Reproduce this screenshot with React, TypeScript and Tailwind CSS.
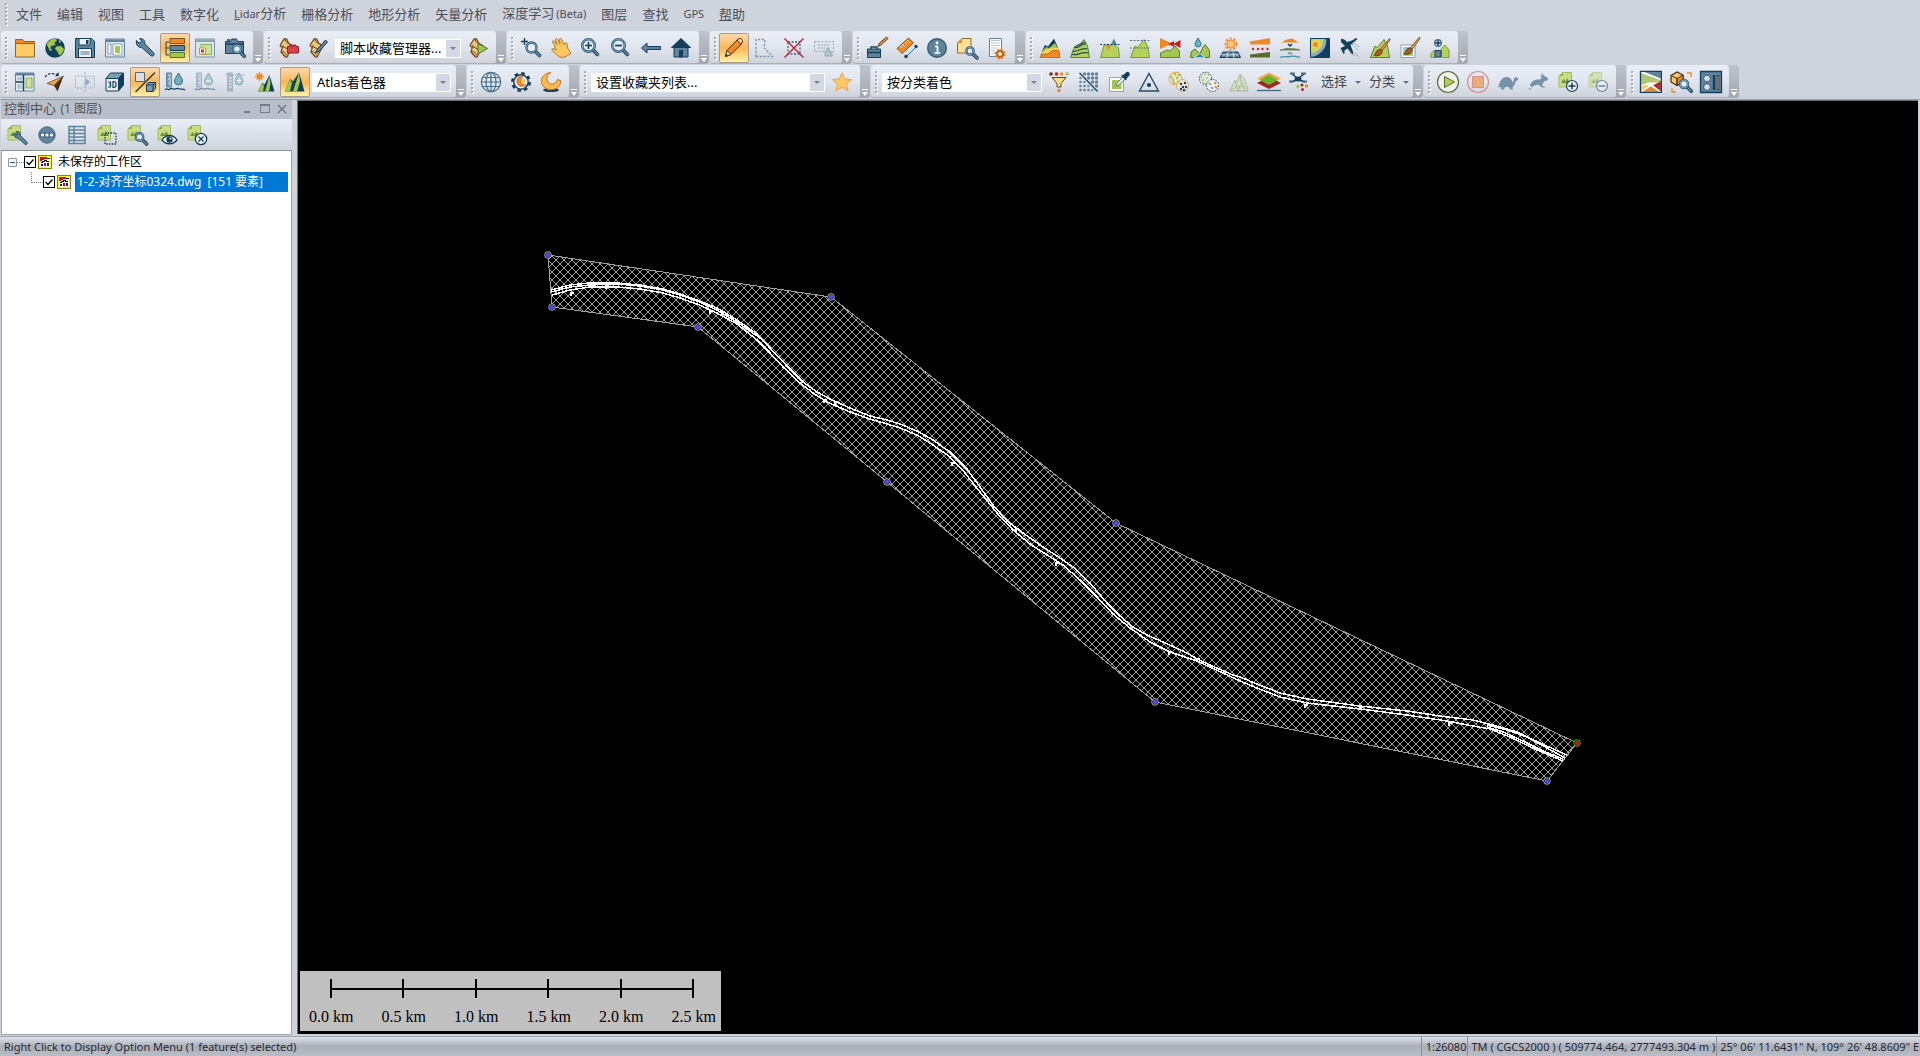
import React from "react";
import type { ReactNode } from "react";

const NAVY = "#123f5e";
const SLATE = "#5f849c";
const GREEN = "#a3c64c";
const ORANGE = "#ee8a26";
const GOLD = "#fbc75e";

/* ---------- shared pieces of the icon set ---------- */

const Doc = (
  <g>
    <path d="M1 4 5 .5h8.500V15H1z" fill="#c9dc82" stroke="#a3b96a" strokeWidth="1" />
    <path d="M1 4h4V.5z" fill="#8fae45" />
    <path d="M3 11l2.500-4 2 2.500L9 6l3 5z" fill="#6f9440" />
  </g>
);

const Lens = ({ x, y, r = 4 }: { x: number; y: number; r?: number }) => (
  <g>
    <path d={`M${x + r * 0.7} ${y + r * 0.7}l4.500 4.500`} stroke={NAVY} strokeWidth="3.600" strokeLinecap="round" />
    <path d={`M${x + r * 0.9} ${y + r * 0.9}l3.800 3.800`} stroke={SLATE} strokeWidth="1.800" strokeLinecap="round" />
    <circle cx={x} cy={y} r={r} fill="#e3edf3" stroke="#2c5a78" strokeWidth="2.400" />
    <circle cx={x} cy={y} r={r} fill="none" stroke="#7fa3b8" strokeWidth="1" />
  </g>
);

const Peaks = ({ fill = "#b4d25a", stroke = "#5e7f33" }: { fill?: string; stroke?: string }) => (
  <path d="M.5 19.500 5 8l2.500 1.500L14 1.500 17.500 8l2 11.500z" fill={fill} stroke={stroke} strokeWidth="1" />
);

const Wrench = (
  <path d="M1.500 2.500 4 5l2-.5L6.500 2.500 4.500.8c3-.8 6 1.400 5.300 5L18.500 14.800a1.800 1.800 0 0 1-2.700 2.700L6.500 9.300C3 10 .5 6 1.500 2.500z" fill={SLATE} stroke={NAVY} strokeWidth="1" />
);

const Scroll = ({ children }: { children?: ReactNode }) => (
  <g>
    <path d="M6 1 2.500 6.500c-1 2 1 3 2 2L3 14l4 4.500c1 1 3 .5 3-1.500l5-9-4.500-3L9 1.500C8 .3 7 .3 6 1z" fill="#ecc67f" stroke="#6b4420" strokeWidth="1.200" />
    <path d="M6 1.500c2 0 1.500 3 4.500 4M3.500 14c3-1 4 1 5 3.500M4.500 8.500 10 11" fill="none" stroke="#6b4420" strokeWidth="1" />
    {children}
  </g>
);

const Drop = ({ x, y }: { x: number; y: number }) => (
  <path d={`M${x} ${y}c2 3.500 4 5.500 4 8a4 4 0 0 1-8 0c0-2.500 2-4.500 4-8z`} fill="#6fb0bd" stroke="#3a6c7e" strokeWidth="1" />
);

const Ruler = (
  <g>
    <path d="M1.500 1h5v14h-5z" fill="#7396aa" stroke={SLATE} />
    <path d="M3 3h3M4 5h2M3 7h3M4 9h2M3 11h3M4 13h2" stroke="#e3ebf2" />
    <path d="M0 18c2-3 3 1 5-1s3 1 5 0 3-1 5 0 3-1 5 1" fill="none" stroke={NAVY} strokeWidth="1.200" />
  </g>
);

const Dots = ({ pts, c, r = 1.2 }: { pts: number[][]; c: string; r?: number }) => (
  <g fill={c}>
    {pts.map(([x, y], i) => (
      <circle key={i} cx={x} cy={y} r={r} />
    ))}
  </g>
);

const Brush = (
  <g>
    <path d="M19.500.5 10.500 11l2 1.500L20 2z" fill="#e79a4e" stroke="#6b3f1d" strokeWidth=".8" />
    <path d="M4 17.500c2-1 2-5.500 5-6 2-.2 3.500 1.500 3 3-.6 2.500-4.500 4-8 3z" fill="#b05c20" stroke="#4f2b12" strokeWidth=".9" />
  </g>
);

const BATCH = [[2.5, 5], [6, 2], [4, 8], [8, 6], [5, 11], [9, 10], [10, 3]];
const BATCH_LOW = [[12, 12], [16, 11], [14, 15], [17, 15], [12, 17], [15, 18]];

const icons: Record<string, ReactNode> = {
  open: (
    <g stroke="#8b6634" strokeWidth="1">
      <path d="M.5 6V1.500h7L9 3.500h10.500V6z" fill={ORANGE} />
      <path d="M.5 5.500h19v13.500H.5z" fill="#fccb66" />
    </g>
  ),
  globe: (
    <g>
      <circle cx="10" cy="10" r="9.800" fill={NAVY} />
      <path d="M1.500 6C4 2 8 0 11 .8l1 1.700-2.500 2 1 2.500L6 8l-.5 2.500 2 1.500-2.500 1zM11 8.500l5-.5 3 3c-.5 3-2 5-4.500 6.500L12 13l-2-2z" fill={GREEN} />
      <path d="m14 2 2.500 1.500L14 5z" fill={GREEN} />
    </g>
  ),
  save: (
    <g>
      <path d="M.5.5h16l3 3v16H.5z" fill={SLATE} stroke={NAVY} />
      <path d="M4 .5h11V7H4z" fill="#edf1f6" stroke={NAVY} />
      <path d="M11 2h2.500v4H11z" fill={NAVY} />
      <path d="M3.500 10.500h13v9h-13z" fill="#edf1f6" stroke={NAVY} />
      <path d="M5.500 13h9v4h-9z" fill="#9fb3c0" />
    </g>
  ),
  layout: (
    <g>
      <path d="M.5 1h19v18H.5z" fill="#dbe4ec" stroke={SLATE} />
      <path d="M1 1.500h18V4H1z" fill={SLATE} />
      <path d="M3 6h3v10H3zM8 6h9v11H8z" fill="#fff" stroke="#86a1b2" />
      <path d="M10 8h5v7h-5z" fill={GREEN} />
    </g>
  ),
  wrench: Wrench,
  control: (
    <g>
      <path d="M4 4H1v13h3M1 10h3" fill="none" stroke={NAVY} />
      <path d="M5 .5h14.500v5H5z" fill={ORANGE} stroke="#7b5226" />
      <path d="M5 7.500h14.500v5H5z" fill={SLATE} stroke={NAVY} />
      <path d="M5 14.500h14.500v5H5z" fill={GREEN} stroke="#58752c" />
    </g>
  ),
  overview: (
    <g>
      <path d="M.5 1h19v18H.5z" fill="#dbe4ec" stroke="#7897a8" />
      <path d="M1 1.500h18V4H1z" fill="#8ba7b5" />
      <path d="M6 6.500h10.500v10H6z" fill="#cfe09a" stroke="#8fac63" />
      <path d="M4.500 10h6v6h-6z" fill="#fff" stroke={ORANGE} />
      <path d="M6 11.500h3v3H6z" fill="#c23a2a" />
    </g>
  ),
  camera: (
    <g>
      <path d="M.5 3.500h5l1-2.500h5l1 2.500h6v12H.5z" fill={SLATE} stroke={NAVY} />
      <path d="M2 2h3M1 6h17" stroke={NAVY} strokeWidth="1.500" />
      <Lens x={12} y={11} />
    </g>
  ),
  scriptLib: (
    <Scroll>
      <path d="M9.500 8.500h2V7H14v1.500h1.500V7H18v1.500h2.500V15h-11z" fill="#dd3f4b" stroke="#8d2230" />
    </Scroll>
  ),
  scriptEdit: (
    <Scroll>
      <path d="m17.500 2-8 9-2 4 4-2 8-9z" fill={SLATE} stroke={NAVY} />
    </Scroll>
  ),
  scriptRun: (
    <Scroll>
      <path d="m10 5.500 9.500 5-9.500 5.500z" fill={GREEN} stroke="#4d6a25" />
    </Scroll>
  ),
  zoomTool: (
    <g>
      <path d="M0 3.500h7M3.500 0v7" stroke={NAVY} strokeWidth="1.400" />
      <Lens x={10.5} y={9.5} r={5} />
    </g>
  ),
  pan: (
    <path d="M3 6.500 1.500 4.200c-.5-1.500 1.500-2 2-1L6 7 4.500 2c-.2-1.600 1.800-1.800 2.300-.5L9 6 8.500 1.500c0-1.600 2-1.600 2.300 0L13 6.500l1-1.500c1-1 2 0 2 1l1 5c1 1.500 2.500 2 2.500 4.500L15 18.500c-3 1.500-6.500 1-8.500-1L1 12.500c-.8-1.500 1-2.500 2-1.500l2 1z" fill={GOLD} stroke="#a5712b" strokeWidth=".9" />
  ),
  zoomIn: (
    <g>
      <Lens x={7.5} y={7.5} r={6.3} />
      <path d="M4 7.500h7M7.500 4v7" stroke={NAVY} strokeWidth="1.700" />
    </g>
  ),
  zoomOut: (
    <g>
      <Lens x={7.5} y={7.5} r={6.3} />
      <path d="M4 7.500h7" stroke={NAVY} strokeWidth="1.700" />
    </g>
  ),
  back: <path d="M.5 10 6 5v3.500h13.500v3H6V15z" fill={SLATE} stroke={NAVY} />,
  home: (
    <g>
      <path d="M3 9h14v10H3z" fill={SLATE} stroke={NAVY} />
      <path d="M-.5 10 10 0l10.500 10z" fill={NAVY} />
      <path d="M8 12h4v7.500H8z" fill={NAVY} />
    </g>
  ),
  digitizer: (
    <g>
      <path d="m1.500 18.500 1.500-6L13 2l4.500 4L7 16.500z" fill={ORANGE} stroke="#4c3320" />
      <path d="m13 2 2-1.500c2-.5 4 1.500 3.500 3.500L17 6z" fill="#f3d6a0" stroke="#4c3320" />
      <path d="m3 12.500 4 4-5.500 2z" fill="#f8dfa8" stroke="#4c3320" />
      <path d="m1.500 18.500.8-2.500 1.500 1.500z" fill="#2b211b" />
    </g>
  ),
  vertexEdit: <path d="M2 18.500V1.500h9l-1 8 8.500 9z" fill="none" stroke="#7894a9" strokeWidth="1.300" strokeDasharray="2.200 1.600" />,
  deleteFeature: (
    <g>
      <path d="M4 4h12v12H4z" fill="none" stroke="#3e5f85" strokeDasharray="2 1.500" strokeWidth="1.300" />
      <path d="M.5.5l19 19M19.500.5l-19 19" stroke="#c22535" strokeWidth="1.500" />
    </g>
  ),
  moveFeature: (
    <g opacity=".6">
      <path d="M.5 3.500h19v10H.5z" fill="#dbe2ea" stroke={SLATE} strokeDasharray="2 1.500" />
      <path d="M4 7h12M4 10h7" stroke={SLATE} strokeDasharray="2 1" />
      <path d="M11 18v-5h2v-3h2v4h3v4z" fill="#9fb3c1" stroke={SLATE} />
    </g>
  ),
  toolbox: (
    <g>
      <path d="M.5 11h13v8.500H.5z" fill={SLATE} stroke={NAVY} />
      <path d="M4 11V9h6v2M.5 14.500h13" fill="none" stroke={NAVY} strokeWidth="1.300" />
      <path d="m11 8.500 1.500-3.500L19.500-1 21 .5l-6.500 6z" fill="#e39a4e" stroke="#5e371a" />
    </g>
  ),
  measure: (
    <g>
      <path d="M0 10.500 11.500 0l5 5L5 15.500z" fill={ORANGE} stroke="#8e4f1c" />
      <path d="m3 8 2 2M5 6l2.500 2.500M8 4l2 2M10 2l2.500 2.500" stroke="#fff" />
      <path d="m9 19 10-10" stroke="#2c72a5" />
      <Dots pts={[[9, 18.5], [19, 8.5]]} c={NAVY} r={1.7} />
    </g>
  ),
  info: (
    <g>
      <circle cx="10" cy="10" r="9.300" fill={SLATE} stroke="#3a5a70" strokeWidth="1.400" />
      <circle cx="10" cy="5" r="1.400" fill="#fff" />
      <path d="M8 8.500h2.500V15M7.500 15H13" fill="none" stroke="#fff" strokeWidth="1.700" />
    </g>
  ),
  searchDoc: (
    <g>
      <path d="M.5 5 5 .5h9V15H.5z" fill="#fbe09a" stroke="#8e6b33" />
      <path d="M.5 5H5V.5z" fill={ORANGE} />
      <Lens x={13} y={13} r={3.6} />
    </g>
  ),
  mapSettings: (
    <g>
      <path d="M2.500.5h12v18h-12z" fill="#fff" stroke={SLATE} />
      <path d="M4 2.500h9M4 5h9M4 7.500h9M4 10h6M4 12.500h4M4 15h4" stroke="#b2c6d1" />
      <circle cx="13" cy="16" r="4.600" fill="none" stroke={ORANGE} strokeWidth="2" strokeDasharray="2 1.610" />
      <circle cx="13" cy="16" r="3" fill="#fff" stroke="#c2691a" strokeWidth="2.400" />
    </g>
  ),
  terrainColor: (
    <g>
      <path d="M2 13 5 7l3 1.500L14 .5 18.500 11z" fill={NAVY} />
      <path d="M2 13 6 9l3 1 6-5 3.500 7-.5 4H1z" fill="#a8c34c" />
      <path d="m1.500 15 6-4 11-1.500.5 4-18 5z" fill="#fbd156" />
      <path d="M0 19.500 1.500 16l6 0 5-3.500 6.500 0 1 7z" fill={ORANGE} stroke="#b65f19" strokeWidth=".8" />
    </g>
  ),
  contours: (
    <g>
      <Peaks />
      <path d="M4 9c4 3 8-4 12-3M2.500 13c4 2 8-4 15-2M1.500 16c5 3 9-3 17-1M6 8l9-4" fill="none" stroke="#1e4f4c" strokeWidth="1.200" />
    </g>
  ),
  watershed: (
    <g>
      <path d="m11 6 3-5.500L17 7z" fill={SLATE} />
      <path d="M.5 19.500 4 7h11.500l3 3 1 9.500z" fill="#b4d25a" stroke="#7a9a4a" />
      <path d="M6 7h5l-2.500 6z" fill={ORANGE} />
      <path d="M0 6.500h20" stroke={NAVY} strokeDasharray="2 1.500" />
    </g>
  ),
  profile: (
    <g>
      <Peaks stroke="#7a9a4a" />
      <path d="M0 2.500h20M0 10h20" stroke="#4b6d7e" strokeDasharray="2 1.500" />
    </g>
  ),
  viewShed: (
    <g>
      <path d="M0 0 12 5.500 0 11z" fill={ORANGE} />
      <path d="m8 6 6-3v6zM20.500 2v8L13 6z" fill="#c3222c" />
      <path d="M.5 19.500V15L7 12l3 1 5-5 4.500 5v6.500z" fill={GREEN} stroke="#62813a" />
    </g>
  ),
  flood: (
    <g>
      <path d="M8 0c1.500 3 3 4 3 6a3 3 0 0 1-6 0c0-2 1.500-3 3-6z" fill="#6fb0bd" stroke="#33708a" />
      <path d="m.5 19.500 1-6L5 11l5 5 3-7 2-2.500 4.500 6v7z" fill={GREEN} stroke="#4f7339" />
      <path d="m4 19.500 6-4 5 4z" fill="#2a85aa" stroke="#fff" strokeWidth=".6" />
    </g>
  ),
  solar: (
    <g>
      <circle cx="11" cy="6" r="5.600" fill="none" stroke="#ee9438" strokeWidth="2" strokeDasharray="2.500 1.500" />
      <circle cx="11" cy="6" r="4" fill="#f9c47d" stroke={ORANGE} />
      <path d="M3 14h15l2.500 5.500H0z" fill={SLATE} stroke={NAVY} />
      <path d="M8 14l-1 6M13 14l1 6M1.500 16.800H19" stroke="#dfe8f0" strokeWidth=".9" />
    </g>
  ),
  cutFill: (
    <g>
      <path d="M0 3.500 20 0v6.500H0z" fill={ORANGE} />
      <Dots pts={[[3, 11], [8, 11], [12.5, 11], [17.5, 11]]} c="#d0242f" r={1.2} />
      <path d="M0 19.500v-3L20 14v5.500z" fill="#566b2c" />
    </g>
  ),
  compareTerrain: (
    <g>
      <path d="M0 4.500c4 0 4-3 7-3s4-2 7 0 4 3 6 3z" fill={ORANGE} />
      <path d="m8 6 2 2 2-2" fill="none" stroke={NAVY} strokeWidth="1.500" />
      <path d="M0 12c4 0 5-2 8-1.500S14 10 20 12z" fill="#6c8a3a" stroke="#566b2c" strokeWidth=".7" />
      <path d="m8 16 2-1.500 2 1.500M0 19.500c4-2 6 0 10-1s6 0 10 1" fill="none" stroke="#4694a8" strokeWidth="1.300" />
    </g>
  ),
  density: (
    <g>
      <path d="M.5.5h19v19H.5z" fill={NAVY} stroke={NAVY} />
      <path d="M1 1h15c2 8-6 17-15 18z" fill="#8fa6c4" />
      <path d="M1 1h12.500C14 9 8 15 1 15.500z" fill="#bfd55c" />
      <circle cx="5.500" cy="6.500" r="4.500" fill="#f7cf4d" />
      <circle cx="5.500" cy="6.500" r="2.500" fill={ORANGE} />
    </g>
  ),
  flight: (
    <g>
      <path d="M1 1c2-1 5 2 6 3l5-1.500 4-2.500 1.500 1-7 6 3 8-1.500 1-4.500-5.500-3 2 0 3-1 .5-3-6 4.500-2L1 4z" fill={NAVY} />
      <path d="m12 6 6 6M14 5l5 4M10 15l5 3M15 15l4.500 4" stroke="#6c8a9e" strokeDasharray="1.500 1" />
    </g>
  ),
  terrainPaint: (
    <g>
      <Peaks />
      {Brush}
    </g>
  ),
  imagePaint: (
    <g>
      <path d="M1 7h14v12.500H1z" fill="#fff" stroke="#8b9cab" />
      <path d="M3 9h10v8.500H3z" fill="#9cc6d6" />
      <path d="M3 17.500V14l4-1 6 2v2.500z" fill={GREEN} />
      <g transform="translate(0 -1.500)">{Brush}</g>
    </g>
  ),
  fixTerrain: (
    <g>
      <path d="M1 19.500v-4l3-3 2 1v6zM11.500 19.500v-9L15 7l4 5v7.500z" fill="#b4d25a" stroke="#7a9a4a" />
      <path d="M5 12.500h6v6.500H5z" fill={SLATE} stroke={NAVY} />
      <path d="M8 1v8M4 5h8" stroke={NAVY} strokeWidth="1.600" />
      <circle cx="8" cy="5" r="3.300" fill="none" stroke="#4f7890" strokeWidth="1.400" />
    </g>
  ),
  splitView: (
    <g>
      <path d="M.5 1h18.500v18H.5z" fill="#e6edf3" stroke={SLATE} />
      <path d="M.5 1H19v2.500H.5z" fill={SLATE} />
      <path d="M8.500 3v16M.5 10h8" stroke={NAVY} strokeWidth="1.500" />
      <path d="M11 6h6v10h-6z" fill="#cfe09a" stroke="#87a852" />
      <path d="M2 5h5v3.500H2zM2 12h5v5H2z" fill="#b4cbd6" />
    </g>
  ),
  path3d: (
    <g>
      <path d="M0 5c4-4.500 8-4 13-2" fill="none" stroke={NAVY} strokeWidth="1.300" strokeDasharray="2.500 1.500" />
      <path d="m13.500 0 .5 4-4 .5z" fill={NAVY} />
      <path d="M18.500 4 2 11.500l7 2z" fill="#f0a854" stroke="#6b4420" strokeWidth=".8" />
      <path d="M18.500 4 9 13.500 12.500 19.500z" fill="#4b2d17" />
    </g>
  ),
  mirror: (
    <g opacity=".55">
      <path d="M8 4H.5v12H8" fill="none" stroke={SLATE} strokeDasharray="2 1.500" />
      <path d="M10 4h9.500v12H10z" fill="#d1dfe8" stroke="#9eb5c2" />
      <path d="M10 0v20" stroke={SLATE} strokeDasharray="2 1.500" />
      <path d="m10.500 6 5 4-5 4z" fill={SLATE} />
    </g>
  ),
  box3d: (
    <g stroke={NAVY}>
      <path d="M1 6.500h12.500V19H1z" fill="#e8eff4" />
      <path d="m1 6.500 4.500-5.500h13l-5 5.500z" fill="#7d9eb0" />
      <path d="M13.500 19V6.500l5-5.500v12z" fill={NAVY} />
      <path d="M3 10h2.500v2H4m1.500 0v3H3M8 9.500v6h1.500l1.500-1.500v-3L9.500 9.500z" fill="none" strokeWidth="1.200" />
    </g>
  ),
  linkView: (
    <g>
      <path d="M.5.5h9v9h-9z" fill="#d8dfe6" stroke="#5b6670" />
      <path d="M20 .5.500 20" stroke="#2c3a44" strokeWidth="1.500" />
      <path d="m11.500 13 2-2.500h7v6l-2.500 3h-6.500z" fill="#7d9aac" stroke={NAVY} />
      <path d="M11.500 13H18v6.500M18 13l2.500-2.500" fill="none" stroke={NAVY} />
    </g>
  ),
  water: (
    <g>
      {Ruler}
      <Drop x={13.5} y={1} />
    </g>
  ),
  waterLow: (
    <g opacity=".5">
      {Ruler}
      <Drop x={13.5} y={1} />
      <path d="M11 9h5" stroke="#fff" strokeWidth="1.500" />
    </g>
  ),
  waterHigh: (
    <g opacity=".5">
      <path d="M2.500 1h5v18h-5z" fill="#7396aa" stroke={SLATE} />
      <path d="M4 6h3M4 9h3M4 12h3M4 15h3" stroke="#e3ebf2" />
      <path d="M0 3c2-2 3 1 5 0s3 1 5 0 3-1 5 0 3-1 5 0" fill="none" stroke={SLATE} />
      <Drop x={14} y={1} />
      <path d="M11.500 8.500h5M14 6v5" stroke="#fff" />
    </g>
  ),
  hillShade: (
    <g>
      <path d="M4.500 0v9M0 4.500h9M1.500 1.500l6 6M7.500 1.500l-6 6" stroke={ORANGE} strokeWidth="1.300" />
      <circle cx="4.500" cy="4.500" r="2.500" fill={ORANGE} />
      <path d="m3 19.500 4-9 2.500 2L14.500 3l5 16.500z" fill={NAVY} />
      <path d="m3 19.500 4-9 2 3-1 6zM10 19.500l4.500-16 1 8-1.500 8z" fill={GREEN} />
    </g>
  ),
  shader: (
    <g>
      <path d="M0 19.500 5 7l3 2.500L14 .5l5.500 19z" fill={NAVY} />
      <path d="M0 19.500 5 7l2 4-2 8.500zM8 19.500 14 .5l1 9-3 10z" fill={GREEN} />
    </g>
  ),
  grid: (
    <g fill="none" stroke="#456f8a" strokeWidth="1.200">
      <circle cx="10" cy="10" r="9.700" fill="#dce6ed" />
      <path d="M.5 10h19M10 .5v19M2 5.500h16M2 14.500h16" />
      <ellipse cx="10" cy="10" rx="5" ry="9.500" />
    </g>
  ),
  dayNight: (
    <g>
      <circle cx="10" cy="10" r="8.700" fill="none" stroke={NAVY} strokeWidth="2.600" strokeDasharray="3.500 3.330" />
      <circle cx="10" cy="10" r="7.200" fill="#f4f6fa" stroke={NAVY} strokeWidth="1.500" />
      <path d="M12 4.500c-4.500-1-7 3-6 6.500s6 5 9 1.500c-5 1.500-7-4-3-8z" fill={ORANGE} stroke="#b66616" strokeWidth=".7" />
      <circle cx="12.500" cy="9" r="2.300" fill={GOLD} />
    </g>
  ),
  moon: (
    <g>
      <ellipse cx="10" cy="18" rx="8" ry="2" fill={NAVY} />
      <path d="M10 .5C4 1-.5 5 .5 10.500 2 17 9 19 14 17c4-1.500 6-5 5.500-8.500l-3-1c-1 4-5.500 6-8.500 3.500S5 3 10 .5z" fill="#fbb94d" stroke="#c4741d" />
    </g>
  ),
  star: <path d="m10 .8 2.700 6.200 6.800.6-5.100 4.500 1.600 6.700-6-3.600-6 3.600 1.600-6.700L.5 7.600 7.300 7z" fill="#fdc765" stroke="#efa34a" strokeWidth="1" />,
  filter: (
    <g>
      <Dots pts={[[2, 2]]} c="#6b3318" r={1.8} />
      <Dots pts={[[7.5, 2]]} c="#c3202c" r={1.8} />
      <Dots pts={[[12.5, 2], [10, 18.5]]} c={ORANGE} r={1.8} />
      <Dots pts={[[18, 2]]} c={GREEN} r={1.8} />
      <path d="M3 5.500h14l-5 6V15H8v-3.500z" fill="#fbdc83" stroke="#5a4a34" />
    </g>
  ),
  gridOff: (
    <g>
      <g fill={SLATE}>
        {[0, 1, 2, 3, 4].flatMap((r) => [0, 1, 2, 3, 4].map((c) => <circle key={`${r}${c}`} cx={1.5 + c * 4} cy={2 + r * 4} r={c > r ? 1.8 : 1.3} />))}
      </g>
      <path d="M0 1l18 18.500" stroke="#e8ecf4" strokeWidth="3" />
      <path d="M.5 1l18 18.500" stroke={NAVY} strokeWidth="1.300" />
    </g>
  ),
  picker: (
    <g>
      <path d="M.5 5.500h14v14H.5z" fill="#fff" stroke="#93a4b2" />
      <path d="M3 8h9.500v9H3z" fill={GREEN} />
      <path d="m7 14 1-3 6-6 2 2-6 6z" fill="#dce8ef" stroke={SLATE} />
      <path d="m12 3.500 5 5 1-2.500 2-2a2 2 0 0 0-3-3.500l-2 2z" fill={NAVY} />
    </g>
  ),
  triangle: (
    <g>
      <path d="M10 1.500 19.500 19H.5z" fill="none" stroke="#284a63" strokeWidth="1.400" />
      <circle cx="10" cy="13" r="2.100" fill={NAVY} />
    </g>
  ),
  cluster: (
    <g>
      <circle cx="6.500" cy="6.500" r="6.400" fill="#f5e9dd" stroke="#ee9d57" />
      <circle cx="13.500" cy="13.500" r="5.900" fill="#f5e9dd" stroke="#ee9d57" />
      <Dots pts={BATCH} c={GREEN} r={1.5} />
      <Dots pts={BATCH_LOW} c={NAVY} r={1.2} />
    </g>
  ),
  clusterSplit: (
    <g>
      <circle cx="6.500" cy="6.500" r="6.200" fill="none" stroke={NAVY} strokeDasharray="1.500 1.300" />
      <circle cx="13.500" cy="13.500" r="6" fill="#eef0f5" stroke={NAVY} strokeDasharray="1.500 1.300" />
      <Dots pts={BATCH} c="#bcd286" r={1.3} />
      <Dots pts={[[11, 12], [13, 16]]} c="#8aa5b5" r={1.3} />
      <Dots pts={[[16, 11], [17, 15]]} c={ORANGE} r={1.3} />
    </g>
  ),
  mesh: (
    <g opacity=".55" fill="#cfdcab" stroke="#85a164">
      <path d="M1 19 6 8l2 3 3-9 5 6 3 11z" />
      <path d="m6 8 3 11 4-9 3 9M8 11l3-9 1 9M1 19l7-5 8 1" fill="none" />
    </g>
  ),
  planes: (
    <g>
      <path d="m10 5 12 6-12 6-12-6z" fill="#a52227" />
      <path d="m10 .5 12 6-12 6-12-6z" fill="#f4a64a" />
      <path d="m10 3 9 5-9 5-9-5z" fill="#66b32e" />
      <path d="M-2 18.500h24" stroke="#3c6a86" strokeWidth="1.300" />
    </g>
  ),
  drone: (
    <g>
      <path d="m3 2 5 4M15 2l-5 4M2 10l6-2M16 10l-6-2" stroke={NAVY} strokeWidth="1.600" />
      <path d="M1 1.500h5M12 1.500h5M0 9.500h4M14 9.500h4" stroke="#456f8a" strokeWidth="2.200" />
      <ellipse cx="9" cy="7" rx="3.500" ry="2.500" fill={NAVY} />
      <Dots pts={[[9, 14.5]]} c={GREEN} r={1.7} />
      <Dots pts={[[13, 13]]} c="#6b3318" r={1.5} />
      <Dots pts={[[13.5, 17.5]]} c="#c3202c" r={1.5} />
      <Dots pts={[[17.5, 14]]} c={ORANGE} r={1.7} />
    </g>
  ),
  play: (
    <g stroke="#546b33">
      <circle cx="10" cy="10" r="10.500" fill="#eef1ec" strokeWidth="1.200" />
      <path d="M6.500 4.500 16.500 10l-10 5.500z" fill="#b4cf4e" />
    </g>
  ),
  stop: (
    <g stroke="#d98d8f">
      <circle cx="10" cy="10" r="10.500" fill="none" strokeWidth="1.200" />
      <path d="M4.500 4.500h11v11h-11z" fill="#e8ae78" />
    </g>
  ),
  turtle: <path d="M1 13c1-5 4-8 8-8 3 0 5 3 6 6l1-4c.5-2 3-2.500 4-.5.3 1.500-.5 2.500-2 2.500l-2 5-1.500 1 .5 2.500h-3L11 15H7l-1 2.500H3V15l-3 .5z" fill="#7593a8" />,
  rabbit: <path d="M0 17l5-2-3-1c1-5 5-7 10-6.500l2-2-3-2 3 .5L13 .5l4 4c2 0 3 1.500 3 3.500l-4 1.500-2 4 4 2h-4l-4-3-4 1-4 4z" fill="#7593a8" />,
  addDoc: (
    <g>
      {Doc}
      <circle cx="14" cy="14" r="5.500" fill="#eef4f6" stroke={NAVY} strokeWidth="1.200" />
      <path d="M10.500 14h7M14 10.500v7" stroke={NAVY} strokeWidth="1.500" />
    </g>
  ),
  removeDoc: (
    <g opacity=".55">
      {Doc}
      <circle cx="14" cy="14" r="5.500" fill="#eef4f6" stroke={NAVY} strokeWidth="1.200" />
      <path d="M10.500 14h7" stroke={NAVY} strokeWidth="1.500" />
    </g>
  ),
  landUse: (
    <g transform="scale(1.100) translate(-1 -1)">
      <path d="M0 0h20v20H0z" fill="#fff" />
      <path d="M1 2v11l7-2.500h11V8.500z" fill="#afc673" />
      <path d="M4 1h15v6z" fill={SLATE} />
      <path d="M19 9.500v9L12 13z" fill="#b22a2c" />
      <path d="M1 14v4.500l7-5-2-1z" fill={GOLD} />
      <path d="m2.500 19 7.500-5 7.500 5z" fill="#e28a33" />
      <path d="M.5.500h19v19H.5z" fill="none" stroke={NAVY} strokeWidth="1.200" />
    </g>
  ),
  findObject: (
    <g>
      <path d="M0 3.500 6 0l6 3v7l-6 3.500L0 10z" fill={GOLD} stroke="#3f2b1a" strokeWidth="1.200" />
      <path d="m6 6.500 6-3.500v7l-6 3.500z" fill={ORANGE} stroke="#3f2b1a" />
      <path d="m0 3.500 6 3v7" fill="none" stroke="#3f2b1a" />
      <path d="M16 1h4v4M1 16v4h4" fill="none" stroke={ORANGE} strokeWidth="1.300" />
      <Lens x={13} y={12} />
    </g>
  ),
  panelBox: (
    <g>
      <path d="M-.5-.5h21v21h-21z" fill={SLATE} stroke={NAVY} strokeWidth="1.300" />
      <circle cx="6" cy="6.500" r="3.400" fill="#d6e2ea" stroke="#35566d" />
      <circle cx="6" cy="15" r="3.400" fill="#d6e2ea" stroke="#35566d" />
      <path d="M13 3v15" stroke={NAVY} strokeWidth="2.400" />
      <path d="M17 3v15" stroke={NAVY} strokeWidth="2.600" />
      <path d="M17 4v13" stroke="#d98a45" strokeWidth="1.200" />
    </g>
  ),
  docOptions: (
    <g>
      {Doc}
      <g transform="translate(6 6) scale(.75)">{Wrench}</g>
    </g>
  ),
  more: (
    <g>
      <circle cx="10" cy="10" r="8.200" fill={SLATE} stroke="#4a6e86" />
      <path d="M2.500 7.500h15v5h-15z" fill="#4a6e86" />
      <Dots pts={[[5.5, 10], [10, 10], [14.5, 10]]} c="#fff" r={1.6} />
    </g>
  ),
  table: (
    <g>
      <path d="M2 1.500h16v17H2z" fill="#dbe5ec" stroke={SLATE} strokeWidth="1.500" />
      <path d="M2 5h16M2 8.500h16M2 12h16M2 15.500h16M7 1.500v17" stroke={SLATE} strokeWidth="1.500" />
    </g>
  ),
  docSelect: (
    <g>
      {Doc}
      <path d="M8 8h11v11H8z" fill="none" stroke={NAVY} strokeWidth="1.300" strokeDasharray="1.500 1.250" />
    </g>
  ),
  docZoom: (
    <g>
      {Doc}
      <Lens x={12.5} y={12} r={3.7} />
    </g>
  ),
  docView: (
    <g>
      {Doc}
      <path d="M5 15c4-6 11-6 15 0-4 5-11 5-15 0z" fill="#fff" stroke={NAVY} strokeWidth="1.300" />
      <circle cx="12.500" cy="14.500" r="3.200" fill={NAVY} />
      <circle cx="13.500" cy="13.500" r="1" fill="#fff" />
    </g>
  ),
  docClose: (
    <g>
      {Doc}
      <circle cx="14" cy="14" r="5.700" fill="#eef4f6" stroke={NAVY} strokeWidth="1.300" />
      <path d="m11.500 11.500 5 5M16.500 11.500l-5 5" stroke={NAVY} strokeWidth="1.300" />
    </g>
  ),
};

/* ---------- toolbar building blocks ---------- */

type Item =
  | { kind: "icon"; icon: string; label: string; active?: boolean }
  | { kind: "select"; label: string; value: string; width: string }
  | { kind: "menu"; label: string };

const ic = (icon: string, label: string, active = false): Item => ({ kind: "icon", icon, label, active });
const sel = (label: string, value: string, width: string): Item => ({ kind: "select", label, value, width });

const rowOne: Item[][] = [
  [ic("open", "打开"), ic("globe", "在线数据"), ic("save", "保存"), ic("layout", "地图布局"), ic("wrench", "配置"), ic("control", "控制中心", true), ic("overview", "鹰眼图"), ic("camera", "屏幕截图")],
  [ic("scriptLib", "脚本库"), ic("scriptEdit", "编辑脚本"), sel("脚本", "脚本收藏管理器...", "w-[126px]"), ic("scriptRun", "运行脚本")],
  [ic("zoomTool", "缩放工具"), ic("pan", "平移"), ic("zoomIn", "放大"), ic("zoomOut", "缩小"), ic("back", "上一视图"), ic("home", "全图")],
  [ic("digitizer", "数字化工具", true), ic("vertexEdit", "编辑顶点"), ic("deleteFeature", "删除要素"), ic("moveFeature", "移动要素")],
  [ic("toolbox", "工具箱"), ic("measure", "测量"), ic("info", "要素信息"), ic("searchDoc", "搜索"), ic("mapSettings", "设置")],
  [ic("terrainColor", "地形着色"), ic("contours", "等高线"), ic("watershed", "流域"), ic("profile", "剖面"), ic("viewShed", "视域"), ic("flood", "淹没"), ic("solar", "太阳能"), ic("cutFill", "填挖方"), ic("compareTerrain", "地形比较"), ic("density", "密度"), ic("flight", "飞行"), ic("terrainPaint", "地形绘制"), ic("imagePaint", "影像绘制"), ic("fixTerrain", "地形修复")],
];

const rowTwo: Item[][] = [
  [ic("splitView", "多视图"), ic("path3d", "路径剖面"), ic("mirror", "镜像"), ic("box3d", "3D视图"), ic("linkView", "链接视图", true), ic("water", "水位"), ic("waterLow", "降低水位"), ic("waterHigh", "升高水位"), ic("hillShade", "山体阴影"), ic("shader", "着色器开关", true), sel("着色器", "Atlas着色器", "w-[139px]")],
  [ic("grid", "网格"), ic("dayNight", "昼夜"), ic("moon", "夜间模式")],
  [sel("收藏夹", "设置收藏夹列表...", "w-[234px]"), ic("star", "收藏")],
  [sel("点云着色", "按分类着色", "w-[160px]"), ic("filter", "过滤"), ic("gridOff", "抽稀"), ic("picker", "取色"), ic("triangle", "三角网"), ic("cluster", "聚类"), ic("clusterSplit", "拆分聚类"), ic("mesh", "网格面"), ic("planes", "平面"), ic("drone", "无人机"), { kind: "menu", label: "选择" }, { kind: "menu", label: "分类" }],
  [ic("play", "播放"), ic("stop", "停止"), ic("turtle", "减速"), ic("rabbit", "加速"), ic("addDoc", "添加图层"), ic("removeDoc", "移除图层")],
  [ic("landUse", "土地利用"), ic("findObject", "查找对象"), ic("panelBox", "面板")],
];

function Icon({ name }: { name: string }) {
  return (
    <svg viewBox="0 0 20 20" className="size-5 overflow-visible" fill="none" aria-hidden="true">
      {icons[name]}
    </svg>
  );
}

function Grip() {
  return (
    <span className="flex w-[9px] shrink-0 flex-col items-center justify-center gap-[2px]" aria-hidden="true">
      {[0, 1, 2, 3, 4, 5].map((n) => (
        <span key={n} className="size-[2px] bg-[#a5a9b4] shadow-[1px_1px_0_#ffffff]" />
      ))}
    </span>
  );
}

function IconButton({ icon, label, active }: { icon: string; label: string; active?: boolean }) {
  return (
    <button
      type="button"
      aria-label={label}
      aria-pressed={active || undefined}
      className={
        active
          ? "flex size-[30px] shrink-0 items-center justify-center rounded-[2px] border border-[#a79c8c] bg-linear-to-b from-[#fbd9ac] via-[#fdb455] to-[#fff2a8]"
          : "flex size-[30px] shrink-0 items-center justify-center"
      }
    >
      <Icon name={icon} />
    </button>
  );
}

function Combo({ label, value, width }: { label: string; value: string; width: string }) {
  return (
    <span className={`relative mx-[2px] flex h-[19px] shrink-0 ${width}`}>
      <select aria-label={label} defaultValue={value} className="h-full w-full appearance-none bg-white pl-[5px] text-[13px] leading-[18px] text-black">
        <option>{value}</option>
      </select>
      <span className="pointer-events-none absolute top-px right-px flex h-[17px] w-[14px] items-center justify-center bg-[#d3d9e4]">
        <span className="border-x-[3px] border-t-[3px] border-x-transparent border-t-[#7b7f88]" />
      </span>
    </span>
  );
}

function Toolbar({ items }: { items: Item[] }) {
  return (
    <div role="toolbar" className="flex shrink-0 rounded-[3px] bg-linear-to-b from-[#bdc2cc] to-[#a3a7b1]">
      <div className="flex items-center rounded-[3px] border-b border-[#abafb9] bg-linear-to-b from-[#e9edf6] via-[#e1e5ee] to-[#cfd3dc] pt-[2px] pr-[3px]">
        <Grip />
        {items.map((it) => {
          if (it.kind === "icon") return <IconButton key={it.label} icon={it.icon} label={it.label} active={it.active} />;
          if (it.kind === "select") return <Combo key={it.label} label={it.label} value={it.value} width={it.width} />;
          return (
            <button key={it.label} type="button" className="flex h-[30px] w-12 items-center gap-2 pl-[7px] text-[13px] text-[#43474f]">
              {it.label}
              <span className="border-x-[3px] border-t-[3px] border-x-transparent border-t-[#6e727a]" />
            </button>
          );
        })}
      </div>
      <button type="button" aria-label="工具栏选项" className="flex w-[10px] flex-col items-center justify-end gap-[2px] pb-[2px]">
        <span className="h-px w-[6px] bg-white" />
        <span className="border-x-[3px] border-t-[4px] border-x-transparent border-t-white" />
      </button>
    </div>
  );
}

/* ---------- map ---------- */

const vertices = [[548, 255], [831, 297], [1116, 523], [1577, 743], [1547, 781], [1155, 702], [887, 482], [698, 327], [552, 307]];

type Run = { at: [number, number]; pts: number[] };

/* Each run is surveyed from its own origin, three units to a pixel. */
const trace = (runs: Run[]) =>
  runs
    .flatMap(({ at, pts }) => {
      const out: string[] = [];
      for (let i = 0; i < pts.length; i += 2) out.push(`${Math.round(at[0] + pts[i] / 3)},${Math.round(at[1] + pts[i + 1] / 3)}`);
      return out;
    })
    .join(" ");

const upperRoad = trace([
  { at: [530, 240], pts: [62, 150, 120, 134, 180, 128, 260, 128, 330, 134, 400, 146, 450, 161, 500, 179, 560, 204, 620, 240, 680, 283, 720, 325, 770, 378, 820, 425, 860, 455, 900, 478, 960, 505, 1020, 527, 1070, 540] },
  { at: [900, 420], pts: [0, 13, 50, 32, 100, 60, 150, 97, 200, 147, 240, 200, 280, 255, 320, 302, 370, 340, 420, 375, 470, 407, 520, 442, 570, 490, 620, 548, 660, 588, 700, 620, 740, 645, 790, 665, 850, 693, 910, 725, 1000, 765] },
  { at: [1240, 620], pts: [0, 170, 50, 192, 120, 220, 200, 238, 360, 257, 500, 273, 600, 287, 700, 300, 760, 315, 830, 335, 900, 370, 980, 405] },
]);

const lowerRoad = trace([
  { at: [530, 240], pts: [65, 166, 120, 151, 180, 142, 260, 140, 330, 147, 400, 160, 450, 173, 500, 192, 560, 218, 620, 253, 680, 299, 720, 338, 760, 380, 810, 428, 850, 460, 890, 485, 960, 517, 1020, 538, 1070, 552] },
  { at: [900, 420], pts: [0, 25, 50, 45, 100, 75, 150, 112, 195, 160, 240, 215, 290, 280, 340, 330, 390, 372, 440, 405, 490, 435, 540, 480, 590, 532, 640, 582, 690, 625, 750, 665, 810, 695, 890, 722, 970, 760] },
  { at: [1240, 620], pts: [0, 182, 50, 203, 120, 232, 200, 250, 360, 268, 500, 285, 620, 302, 700, 317, 750, 328, 810, 350, 890, 390, 968, 423] },
]);

const innerRoads = [
  trace([{ at: [530, 240], pts: [62, 156, 120, 142, 180, 134, 260, 133, 330, 138, 400, 151, 450, 165, 500, 184, 560, 210, 620, 245, 690, 295] }]),
  trace([{ at: [1240, 620], pts: [740, 315, 800, 330, 860, 352, 920, 384, 975, 414] }]),
  trace([{ at: [1240, 620], pts: [740, 322, 790, 335, 850, 362, 910, 393, 970, 418] }]),
];

const stations = [[571, 293], [606, 286], [710, 311], [722, 312], [824, 400], [835, 402], [952, 463], [1016, 529], [1056, 563], [1169, 652], [1197, 659], [1305, 705], [1360, 707], [1449, 723], [1490, 726]];

function MapDrawing() {
  return (
    <svg className="absolute inset-0 size-full" role="img" aria-label="DWG 地图" shapeRendering="crispEdges">
      <defs>
        <pattern id="hatch" width="8" height="8" patternUnits="userSpaceOnUse">
          {[0, 1, 2, 3, 4, 5, 6, 7].map((n) => (
            <g key={n} fill="#a0a0a0">
              <rect x={n} y={n} width="1" height="1" />
              <rect x={7 - n} y={n} width="1" height="1" />
            </g>
          ))}
        </pattern>
      </defs>
      <g transform="translate(-298 -101)" fill="none">
        <polygon points={vertices.map((v) => v.join(",")).join(" ")} fill="url(#hatch)" stroke="#a0a0a0" />
        <g stroke="#ffffff" strokeWidth="1.500">
          <polyline points={upperRoad} />
          <polyline points={lowerRoad} />
          {innerRoads.map((p) => (
            <polyline key={p} points={p} />
          ))}
          {stations.map(([x, y]) => (
            <path key={x} d={`M${x - 1} ${y}h4M${x} ${y - 1}v4`} />
          ))}
        </g>
        <g shapeRendering="auto">
          {vertices.map(([x, y]) => {
            const last = x === 1577;
            return (
              <g key={x}>
                <circle cx={x} cy={y} r="3.300" fill="#000" stroke={last ? "#00e000" : "#b4b4b4"} strokeWidth="1" />
                <circle cx={x} cy={y} r="2.200" fill={last ? "#ff0000" : "#4a4aff"} />
              </g>
            );
          })}
        </g>
      </g>
    </svg>
  );
}

function ScaleBar() {
  return (
    <div className="absolute bottom-[3px] left-[2px] h-[60px] w-[421px] bg-[#c0c0c0] pt-2 font-['Liberation_Serif',serif] text-[16px] text-black">
      <div className="mr-[27px] ml-[30px] flex h-[19px] justify-between bg-[linear-gradient(#000,#000)] bg-[length:100%_2px] bg-center bg-no-repeat">
        {[0, 1, 2, 3, 4, 5].map((n) => (
          <span key={n} className="w-[2px] bg-black" />
        ))}
      </div>
      <div className="mt-[10px] flex justify-between pr-[5px] pl-[9px] leading-[18px]">
        {["0.0 km", "0.5 km", "1.0 km", "1.5 km", "2.0 km", "2.5 km"].map((t) => (
          <span key={t}>{t}</span>
        ))}
      </div>
    </div>
  );
}

/* ---------- panels ---------- */

const menus: ReactNode[] = [
  "文件", "编辑", "视图", "工具", "数字化",
  <><small className="text-[11px]"><u>L</u>idar</small>分析</>,
  "栅格分析", "地形分析", "矢量分析",
  <>深度学习<small className="ml-[2px] text-[11px]">(Beta)</small></>,
  "图层", "查找",
  <small className="text-[11px]">GPS</small>,
  <><u>帮</u>助</>,
];

function LayerIcon() {
  return (
    <svg viewBox="0 0 14 14" className="size-[14px] shrink-0" shapeRendering="crispEdges" aria-hidden="true">
      <path d="M0 0h14v14H0z" fill="#8a8400" />
      <path d="M1 1h12v12H1z" fill="#ffff00" />
      <path d="M2 2h10v10H2z" fill="#ffffff" />
      <path d="M2 2h7v2H6v1H4v1H2z" fill="#e00000" />
      <path d="M9 3h3v1H9zM6 5h3v1H6zM4 6h3v1H4zM3 7h2v1H3zM8 6h3v1H8z" fill="#101010" />
      <path d="M3 9h2v2H3zM9 8h2v3H9z" fill="#1414d0" />
      <path d="M6 8h2v3H6z" fill="#e00000" />
    </svg>
  );
}

function Check({ id }: { id: string }) {
  return (
    <span className="relative flex size-3 shrink-0">
      <input id={id} type="checkbox" defaultChecked className="peer size-3 appearance-none border border-black bg-white" />
      <svg viewBox="0 0 12 12" className="pointer-events-none absolute inset-0 size-3 opacity-0 peer-checked:opacity-100" aria-hidden="true">
        <path d="m2.500 6 2.500 2.500L9.500 3.500" fill="none" stroke="#000" strokeWidth="1.300" />
      </svg>
    </span>
  );
}

const panelTools: [string, string][] = [
  ["docOptions", "图层选项"], ["more", "更多"], ["table", "属性表"], ["docSelect", "选择图层"], ["docZoom", "缩放至图层"], ["docView", "显示图层"], ["docClose", "关闭图层"],
];

function ControlCenter() {
  return (
    <aside className="ml-px flex w-[291px] shrink-0 flex-col">
      <header className="flex h-[19px] shrink-0 items-start justify-between bg-[#b9bfca] pr-[5px] pl-[3px] text-[13px] leading-4 text-[#4d5159]">
        <h1>
          控制中心 <small className="ml-px text-xs">(1 图层)</small>
        </h1>
        <span className="flex gap-[7px] pt-1">
          <button type="button" aria-label="最小化" className="flex size-[10px] items-end">
            <span className="mb-px ml-px h-[2px] w-[6px] bg-[#777b84]" />
          </button>
          <button type="button" aria-label="最大化" className="h-[9px] w-[10px] border border-t-2 border-[#777b84]" />
          <button type="button" aria-label="关闭" className="size-[10px]">
            <svg viewBox="0 0 10 10" className="size-[10px]" aria-hidden="true">
              <path d="m1 1 8 8M9 1 1 9" stroke="#6d717a" strokeWidth="1.400" />
            </svg>
          </button>
        </span>
      </header>
      <div role="toolbar" aria-label="图层工具" className="flex h-8 shrink-0 items-center border-b border-[#8d9099] bg-linear-to-b from-[#e9edf6] to-[#cfd3dc] pl-px">
        {panelTools.map(([icon, label]) => (
          <IconButton key={icon} icon={icon} label={label} />
        ))}
      </div>
      <div role="tree" aria-label="图层" className="mb-px flex-1 border-x border-b border-[#9ea1a9] bg-white pt-px text-xs">
        <div role="treeitem" aria-expanded="true" className="flex h-5 items-center pl-[6px]">
          <button type="button" aria-label="折叠" className="flex size-[9px] items-center justify-center rounded-[1px] border border-[#8f959e] bg-[#f4f6f8]">
            <span className="h-px w-[5px] bg-[#3a58a8]" />
          </button>
          <span className="w-[7px] border-t border-dotted border-[#808080]" />
          <Check id="workspace" />
          <span className="ml-[2px] flex"><LayerIcon /></span>
          <label htmlFor="workspace" className="ml-[6px] text-black">未保存的工作区</label>
        </div>
        <div role="treeitem" aria-selected="true" className="flex h-5 items-center pr-[3px] pl-[29px]">
          <span className="mb-[9px] h-[11px] w-[12px] border-b border-l border-dotted border-[#808080]" />
          <Check id="drawing" />
          <span className="ml-[2px] flex"><LayerIcon /></span>
          <label htmlFor="drawing" className="ml-1 h-5 flex-1 bg-[#0078d7] pl-[2px] leading-5 text-white">
            1-2-对齐坐标0324.dwg <span className="pl-[3px]">[151 要素]</span>
          </label>
        </div>
      </div>
    </aside>
  );
}

export default function App() {
  return (
    <div className="flex h-screen flex-col overflow-hidden bg-[#ced3dc] font-['Noto_Sans','Noto_Sans_CJK_SC',sans-serif]">
      <nav className="flex h-[31px] shrink-0 pb-1 pl-px" aria-label="主菜单">
        <Grip />
        <ul className="flex items-center gap-[15px] pl-[6px] text-[13px] leading-5 text-[#4b4f58]">
          {menus.map((m, i) => (
            <li key={i}>
              <button type="button" className="whitespace-nowrap">{m}</button>
            </li>
          ))}
        </ul>
      </nav>
      <div className="flex shrink-0 flex-col gap-px border-b border-[#9b9ea6] pb-px pl-px">
        {[rowOne, rowTwo].map((row, i) => (
          <div key={i} className="flex h-[33px] gap-px">
            {row.map((items, j) => (
              <Toolbar key={j} items={items} />
            ))}
          </div>
        ))}
      </div>
      <div className="flex min-h-0 flex-1">
        <ControlCenter />
        <main className="relative mr-[2px] mb-[2px] ml-[5px] flex-1 overflow-hidden border-t border-l border-[#707070] bg-black">
          <MapDrawing />
          <ScaleBar />
        </main>
      </div>
      <footer className="flex h-5 shrink-0 border-t border-[#9da0a8] bg-linear-to-b from-[#dfe2e9] via-[#a9aeb8] to-[#b9bdc6] text-[11px] leading-5 whitespace-nowrap text-[#26292f]">
        <span className="flex-1 pl-1">Right Click to Display Option Menu (1 feature(s) selected)</span>
        <span className="border-l border-[#8b8f98] pr-px pl-1">1:26080</span>
        <span className="border-l border-[#8b8f98] pr-px pl-[3px]">TM ( CGCS2000 ) ( 509774.464, 2777493.304 m )</span>
        <span className="border-l border-[#8b8f98] pr-px pl-[3px]">25° 06' 11.6431" N, 109° 26' 48.8609" E</span>
      </footer>
    </div>
  );
}
